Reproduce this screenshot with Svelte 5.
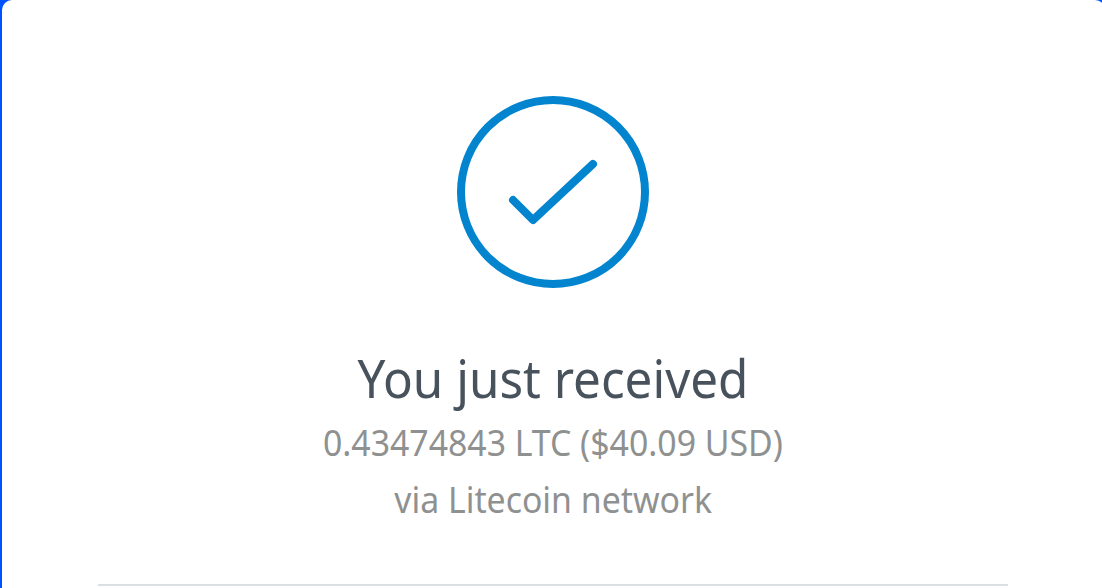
<script>
  let amount   = $state('0.43474843');
  let currency = $state('LTC');
  let fiat     = $state('$40.09 USD');
  let network  = $state('Litecoin');
</script>

<div class="page">
  <div class="receipt-card">
    <svg class="check-icon" viewBox="0 0 192 192" fill="none" stroke="currentColor" stroke-width="8" stroke-linecap="round" stroke-linejoin="round">
      <circle cx="96" cy="96" r="92" />
      <path d="M56 104l20 20 60-56" />
    </svg>

    <div class="receipt-text">
      <h1>You just received</h1>
      <p>{amount} {currency} ({fiat})</p>
      <p>via {network} network</p>
    </div>

    <hr class="divider" />
  </div>
</div>

<style>
  :global(body) { margin: 0; background: #0052ff; }

  .page {
    height: 588px;
    padding-left: 2px;
    box-sizing: border-box;
    overflow: hidden;
    font-family: "Noto Sans", "Open Sans", sans-serif;
  }
  .receipt-card {
    display: flex;
    flex-direction: column;
    align-items: center;
    height: 620px;
    margin-right: -3px;
    padding: 96px 97px 0 96px;
    box-sizing: border-box;
    background: #fff;
    border-radius: 10px 10px 0 0;
  }
  .check-icon { width: 192px; height: 192px; flex: none; color: #0284cf; }

  .receipt-text {
    display: flex;
    flex-direction: column;
    align-items: center;
    margin-top: 53px;
    white-space: nowrap;
  }
  /* slightly condensed text */
  h1 {
    margin: 0;
    font-size: 52px;
    line-height: 73px;
    font-weight: 400;
    color: #47525c;
    transform: scaleX(0.949);
  }
  p {
    margin: 0;
    font-size: 36px;
    line-height: 57px;
    color: #8f9191;
    transform: scaleX(0.939);
  }

  .divider {
    width: 100%;
    height: 2px;
    margin: 56px 0 0;
    border: 0;
    background: #dadfe2;
  }
</style>
